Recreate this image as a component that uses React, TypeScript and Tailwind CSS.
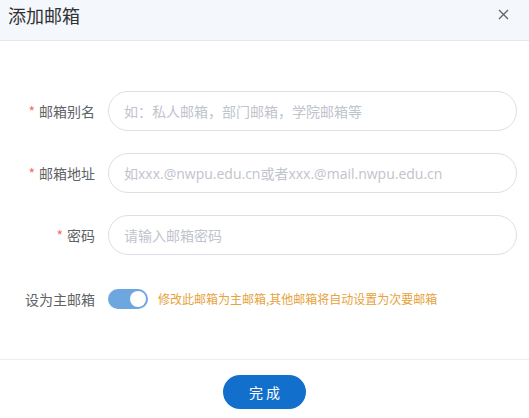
import React from "react";

const fields = [
  { label: "邮箱别名", placeholder: "如：私人邮箱，部门邮箱，学院邮箱等", type: "text" },
  { label: "邮箱地址", placeholder: "如xxx.@nwpu.edu.cn或者xxx.@mail.nwpu.edu.cn", type: "text" },
  { label: "密码", placeholder: "请输入邮箱密码", type: "password" },
];

const font = "font-['Microsoft_YaHei','Noto_Sans_CJK_SC',sans-serif]";

export default function App() {
  return (
    <div className={`w-[529px] h-[418px] bg-white flex flex-col ${font}`}>
      {/* header */}
      <div className="h-[41px] shrink-0 bg-[#f4f7fb] border-b border-[#e4e7ed] flex items-start justify-between pl-[8px] pr-[20px]">
        <span className="text-[18px] leading-[30px] text-[#303133]">添加邮箱</span>
        <button className="mt-[9px] text-[#606266]">
          <svg width="11" height="11" viewBox="0 0 11 11" fill="none" stroke="currentColor" strokeWidth="1.3">
            <path d="M1 1L10 10M10 1L1 10" />
          </svg>
        </button>
      </div>

      {/* form */}
      <div className="flex-1 flex flex-col pt-[50px]">
        {fields.map((f) => (
          <div key={f.label} className="flex items-center h-[40px] mb-[22px]">
            <label className="w-[108px] shrink-0 pr-[13px] text-right text-[14px] text-[#606266]">
              <span className="text-[#f56c6c] mr-[4px]">*</span>
              {f.label}
            </label>
            <input
              type={f.type}
              placeholder={f.placeholder}
              className="w-[409px] h-[40px] rounded-full border border-[#dcdfe6] px-[15px] text-[14px] text-[#606266] placeholder:text-[#c0c4cc] outline-none font-['Segoe_UI','Open_Sans','Noto_Sans_CJK_SC',sans-serif]"
            />
          </div>
        ))}

        <div className="flex items-center h-[20px] mt-[12px]">
          <span className="w-[108px] shrink-0 pr-[13px] text-right text-[14px] text-[#606266]">设为主邮箱</span>
          <div className="w-[40px] h-[20px] rounded-full bg-[#6ea6e0] relative shrink-0">
            <span className="absolute right-[2px] top-[2px] w-[16px] h-[16px] rounded-full bg-white" />
          </div>
          <span className="ml-[10px] text-[12px] text-[#e6a23c]">修改此邮箱为主邮箱,其他邮箱将自动设置为次要邮箱</span>
        </div>
      </div>

      {/* footer */}
      <div className="h-[59px] shrink-0 border-t border-[#ebeef5] flex justify-center pt-[15px]">
        <button className="w-[83px] h-[34px] rounded-full bg-[#126fcc] text-white text-[14px] tracking-[3px] pl-[3px]">
          完成
        </button>
      </div>
    </div>
  );
}
